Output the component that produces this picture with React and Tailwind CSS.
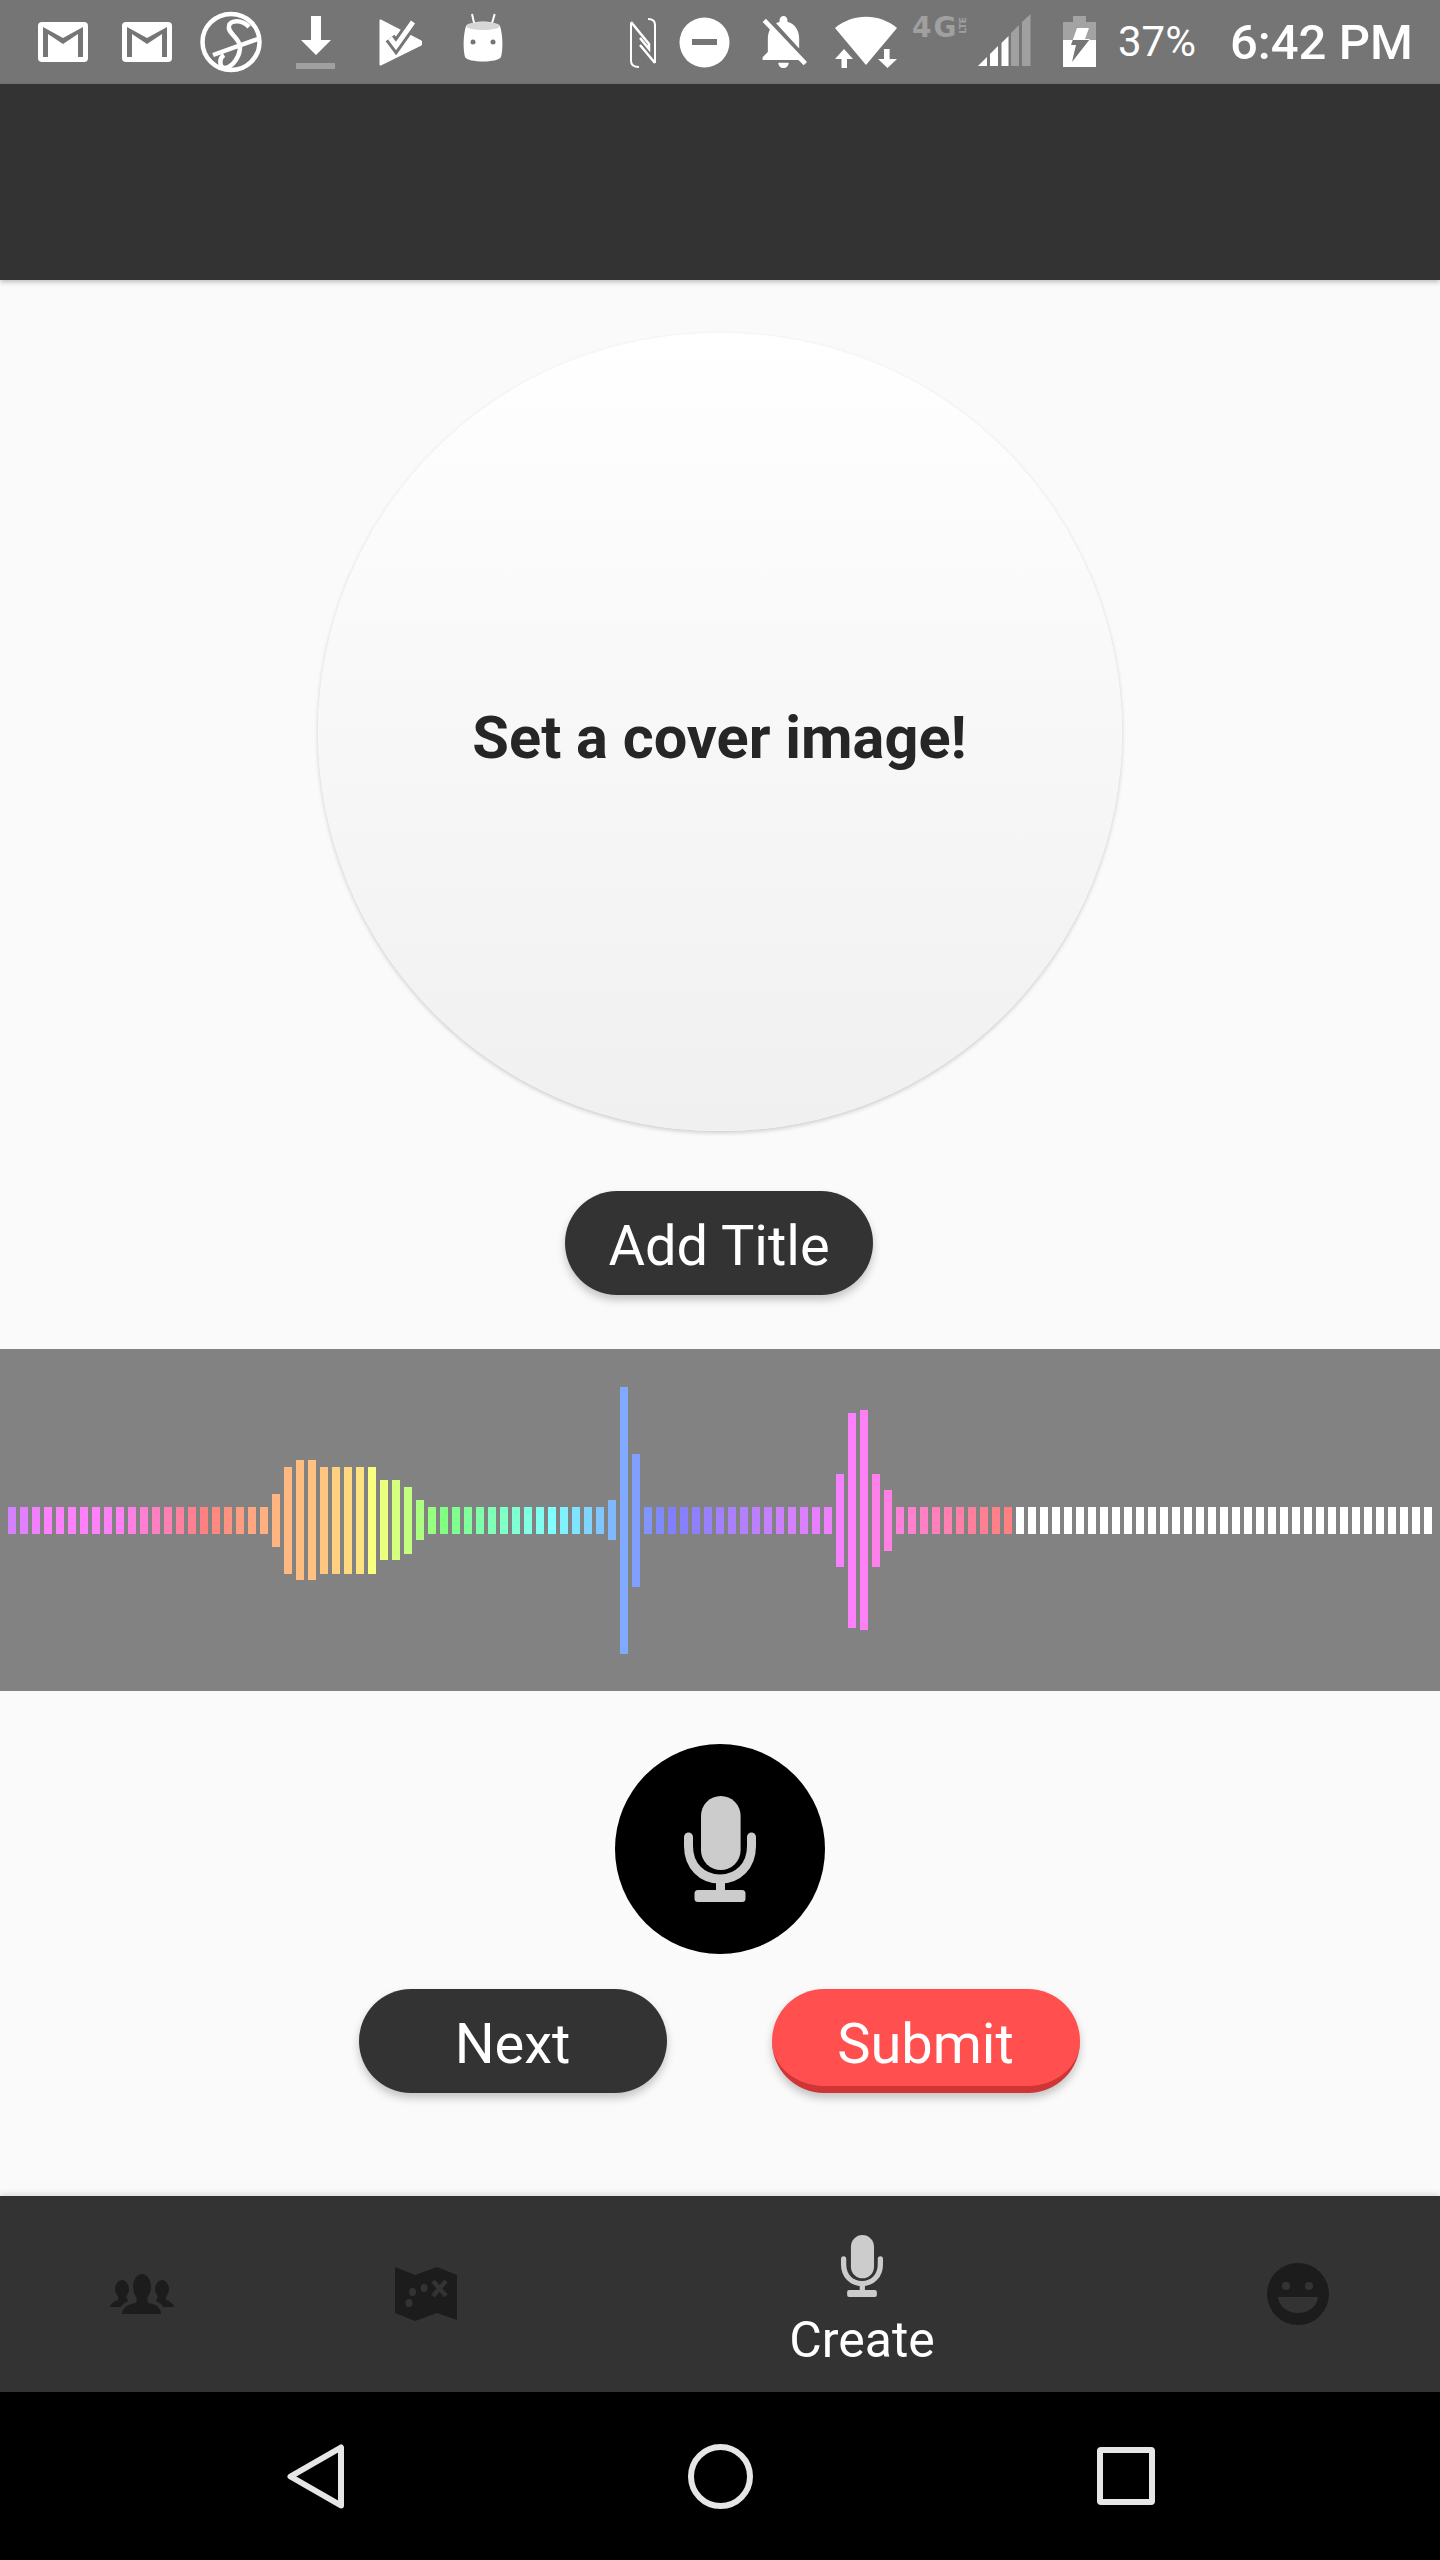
import React from 'react';

const tall = {
  22: 53, 23: 107, 24: 120, 25: 120, 26: 107, 27: 107, 28: 107, 29: 107, 30: 107,
  31: 80, 32: 80, 33: 67, 34: 40, 50: 40, 51: 267, 52: 133, 69: 93, 70: 215, 71: 220, 72: 93, 73: 61,
};

const hueStops = [
  [0, 280], [3, 300], [9, 305], [16, 360], [21, 383], [26, 393], [29, 407], [30, 422],
  [33, 448], [36, 480], [45, 540], [51, 580], [55, 600], [70, 660], [83, 720],
];

const hueAt = (i) => {
  for (let s = 1; s < hueStops.length; s++) {
    const [x0, h0] = hueStops[s - 1];
    const [x1, h1] = hueStops[s];
    if (i <= x1) return h0 + ((i - x0) / (x1 - x0)) * (h1 - h0);
  }
  return 0;
};

const bars = Array.from({ length: 119 }, (_, i) => ({
  height: tall[i] || 27,
  color: i < 84 ? `hsl(${hueAt(i) % 360}, 100%, 75%)` : '#ffffff',
}));

const Gmail = ({ className }) => (
  <svg className={className} width="50" height="84" viewBox="0 0 50 84">
    <rect x="0" y="22" width="50" height="40" rx="4" fill="#fff" />
    <path d="M5 27L25 38L45 27V57H40V34L25 44L10 34V57H5Z" fill="#757575" />
  </svg>
);

const GlobeS = ({ className }) => (
  <svg className={className} width="62" height="84" viewBox="0 0 62 84" fill="none" stroke="#fff">
    <ellipse cx="31" cy="42" rx="28.5" ry="28" strokeWidth="4.5" />
    <path d="M49 27C42 19 30 20 29 26C27 33 40 38 40 47C40 56 33 67 25 68C19 68 19 58 24 55" strokeWidth="4.5" />
    <path d="M13 55L58 39" strokeWidth="4.5" />
  </svg>
);

const Download = ({ className }) => (
  <svg className={className} width="39" height="84" viewBox="0 0 39 84">
    <path d="M15 16H25V40H35L20 55L5 40H15Z" fill="#fff" />
    <rect x="0" y="63" width="39" height="6" fill="#a0a0a0" />
  </svg>
);

const PlayCheck = ({ className }) => (
  <svg className={className} width="43" height="84" viewBox="0 0 43 84" fill="none">
    <path d="M1.5 20.5L41 41C43 42 43 44 41 45L1.5 64.5Z" fill="#fff" stroke="#fff" strokeWidth="2" strokeLinejoin="round" />
    <path d="M11 38L17 46L34 22" stroke="#757575" strokeWidth="11" />
    <path d="M11 38L17 46L34 22" stroke="#fff" strokeWidth="5" />
  </svg>
);

const AndroidBot = ({ className }) => (
  <svg className={className} width="40" height="84" viewBox="0 0 40 84">
    <path d="M9 14L11.5 25M31.7 14L28.5 25" stroke="#fff" strokeWidth="2" />
    <path d="M3 26C12 20 28 20 37 26C40 35 40 50 38 57C35 63 5 63 2 57C0 50 0 35 3 26Z" fill="#fff" />
    <ellipse cx="20" cy="26" rx="17" ry="4" fill="#d6d6d6" />
    <circle cx="10" cy="42" r="2.5" fill="#757575" />
    <circle cx="30" cy="42" r="2.5" fill="#757575" />
  </svg>
);

const Nfc = ({ className }) => (
  <svg className={className} width="26" height="84" viewBox="0 0 26 84" fill="none" stroke="#fff" strokeWidth="2">
    <path d="M1 23V61C1 65 4 67 9 67" />
    <path d="M18 19C23 19 25 21 25 25V63" />
    <path d="M1 22L19 44V49L10 38" strokeWidth="2.5" />
    <path d="M10 45L25 63" strokeWidth="2.5" />
  </svg>
);

const Dnd = ({ className }) => (
  <svg className={className} width="51" height="84" viewBox="0 0 51 84">
    <circle cx="25.5" cy="42.5" r="25" fill="#fff" />
    <rect x="13" y="39" width="25" height="6" fill="#757575" />
  </svg>
);

const BellOff = ({ className }) => (
  <svg className={className} width="47" height="52" viewBox="3 2.5 18 19.5" preserveAspectRatio="none" fill="#fff">
    <path d="M20 18.69L7.84 6.14 5.27 3.49 4 4.76l2.8 2.8v.01c-.52.99-.8 2.16-.8 3.42v5l-2 2v1h13.73l2 2L21 19.72l-1-1.03zM12 22c1.11 0 2-.89 2-2h-4c0 1.11.89 2 2 2zm6-7.32V11c0-3.08-1.64-5.64-4.5-6.32V4c0-.83-.67-1.5-1.5-1.5s-1.5.67-1.5 1.5v.68c-.15.03-.29.08-.42.12-.1.03-.2.07-.3.11h-.01c-.2.08-.4.17-.59.27-.01 0-.01 0-.02.01L18 14.68z" />
  </svg>
);

const Wifi = ({ className }) => (
  <svg className={className} width="62" height="84" viewBox="0 0 62 84" fill="#fff">
    <path d="M0 28C18 13 44 13 62 28L31 65Z" />
    <path d="M9 49L18 59H12V68H6.5V59H0Z" />
    <path d="M49 49H54.6V59H62L52.5 68L43 59H49Z" />
  </svg>
);

const Signal = ({ className }) => (
  <svg className={className} width="53" height="84" viewBox="0 0 53 84">
    <path d="M0 66L9 57V66Z" fill="#fff" />
    <path d="M12 54L20 46V66H12Z" fill="#fff" />
    <path d="M23.5 43L30.5 36V66H23.5Z" fill="#fff" />
    <path d="M33 33L41 25V66H33Z" fill="#a0a0a0" />
    <path d="M44 22L52.5 14V66H44Z" fill="#a0a0a0" />
  </svg>
);

const Battery = ({ className }) => (
  <svg className={className} width="33" height="84" viewBox="0 0 33 84">
    <defs>
      <clipPath id="bolt-top"><rect x="0" y="16" width="33" height="24" /></clipPath>
      <clipPath id="bolt-bottom"><rect x="0" y="40" width="33" height="27" /></clipPath>
    </defs>
    <path d="M10 16H23V22H33V40H0V22H10Z" fill="#a3a3a3" />
    <rect x="0" y="40" width="33" height="27" fill="#fff" />
    <path d="M14 28H26L22 39H27L9 62L13 45H8Z" fill="#fff" clipPath="url(#bolt-top)" />
    <path d="M14 28H26L22 39H27L9 62L13 45H8Z" fill="#757575" clipPath="url(#bolt-bottom)" />
  </svg>
);

const Mic = ({ className }) => (
  <svg className={className} viewBox="0 0 72 106" preserveAspectRatio="none" fill="none">
    <rect x="17" y="0" width="39.6" height="74" rx="19.8" fill="#cccccc" />
    <path d="M4.5 41V50C4.5 70 18 83 36 83C54 83 67.5 70 67.5 50V41" stroke="#cccccc" strokeWidth="9" strokeLinecap="round" />
    <rect x="32" y="84" width="9" height="14" fill="#cccccc" />
    <rect x="10.5" y="94" width="51" height="12" rx="3.5" fill="#cccccc" />
  </svg>
);

const Group = () => (
  <svg width="64" height="40" viewBox="0 0 64 40" fill="#1c1c1c">
    <ellipse cx="32" cy="13" rx="9" ry="13" />
    <path d="M27 22H37L38 29C45 30 51 33 51 40H12C12 33 19 30 26 29Z" />
    <ellipse cx="12" cy="15" rx="7" ry="9" />
    <path d="M8 22H16L18 27C16 28 12 30 11 33H0C1 29 5 27 8 26Z" />
    <ellipse cx="52" cy="15" rx="7" ry="9" />
    <path d="M48 22H56V26C59 27 63 29 64 33H53C52 30 48 28 46 27Z" />
  </svg>
);

const TreasureMap = () => (
  <svg width="62" height="54" viewBox="0 0 62 54">
    <path d="M0 0L20 8L42 0L62 8V53L42 46L20 54L0 46Z" fill="#1c1c1c" />
    <ellipse cx="17.5" cy="25" rx="3.5" ry="4" fill="#333" />
    <ellipse cx="29" cy="21" rx="3.5" ry="4" fill="#333" />
    <ellipse cx="14" cy="36" rx="3.5" ry="4" fill="#333" />
    <path d="M38 14L51 29M51 14L38 29" stroke="#333" strokeWidth="4.5" />
  </svg>
);

const Smile = () => (
  <svg width="62" height="62" viewBox="0 0 62 62">
    <circle cx="31" cy="31" r="31" fill="#1c1c1c" />
    <circle cx="19" cy="23" r="4" fill="#333" />
    <circle cx="42" cy="23" r="4" fill="#333" />
    <path d="M11 34H51C50 44 41 50 31 50C21 50 12 44 11 34Z" fill="#333" />
  </svg>
);

const StatusBar = () => (
  <div className="flex items-center h-[84px] bg-[#757575] font-['Roboto',sans-serif] text-white">
    <Gmail className="ml-[38px]" />
    <Gmail className="ml-[34px]" />
    <GlobeS className="ml-[28px]" />
    <Download className="ml-[34px]" />
    <PlayCheck className="ml-[44px]" />
    <AndroidBot className="ml-[41px]" />
    <Nfc className="ml-[127px]" />
    <Dnd className="ml-[23px]" />
    <BellOff className="ml-[30px]" />
    <Wifi className="ml-[28px]" />
    <div className="flex self-start items-start ml-[15px] mt-[15px] w-[62px] text-[#a0a0a0] font-bold font-['DejaVu_Sans',sans-serif]">
      <span className="text-[28px] leading-[26px] tracking-[2px]">4G</span>
      <span className="text-[9px] leading-[10px] mt-[2px] [writing-mode:vertical-rl] rotate-180">LTE</span>
    </div>
    <Signal className="ml-[4px]" />
    <Battery className="ml-[32px]" />
    <span className="ml-[22px] text-[42px] leading-none">37%</span>
    <span className="ml-[34px] text-[49px] leading-none font-medium">6:42 PM</span>
  </div>
);

const Pill = ({ label, className }) => (
  <button className={`flex items-center justify-center h-[104px] rounded-[52px] text-white text-[56px] shadow-[0_5px_8px_rgba(0,0,0,0.22)] ${className}`}>
    {label}
  </button>
);

const App = () => {
  return (
    <div className="w-[1440px] h-[2560px] flex flex-col bg-[#fafafa] font-['Roboto',sans-serif] overflow-hidden">
      <StatusBar />
      <div className="h-[196px] bg-[#333333] shadow-[0_2px_5px_rgba(0,0,0,0.25)]" />

      <main className="h-[1916px] flex flex-col items-center">
        <div className="mt-[53px] mr-[1px] w-[804px] h-[798px] flex items-center justify-center rounded-full bg-gradient-to-b from-white to-[#f0f0f0] shadow-[0_2px_4px_rgba(0,0,0,0.18)]">
          <span className="mt-[13px] text-[59.5px] font-bold text-[#262626]">Set a cover image!</span>
        </div>

        <Pill label="Add Title" className="mt-[60px] mr-[2px] pt-[6px] w-[308px] bg-[#333333]" />

        <div className="mt-[54px] w-full h-[342px] flex items-center gap-[4px] pl-[8px] bg-[#828282]">
          {bars.map((bar, i) => (
            <div key={i} className="w-[8px] shrink-0" style={{ height: bar.height, backgroundColor: bar.color }} />
          ))}
        </div>

        <div className="mt-[53px] w-[210px] h-[210px] flex items-center justify-center rounded-full bg-black">
          <Mic className="w-[72px] h-[106px]" />
        </div>

        <div className="mt-[35px] mr-[2px] flex gap-[105px]">
          <Pill label="Next" className="w-[308px] pt-[6px] bg-[#333333]" />
          <Pill label="Submit" className="w-[308px] pt-[13px] bg-[#ff4f4f] border-b-[7px] border-[#cf3535]" />
        </div>
      </main>

      <nav className="h-[196px] flex bg-[#333333] shadow-[0_-2px_6px_rgba(0,0,0,0.12)]">
        <div className="w-[284px] flex items-center justify-center"><Group /></div>
        <div className="w-[284px] flex items-center justify-center"><TreasureMap /></div>
        <div className="w-[588px] flex flex-col items-center pt-[39px]">
          <Mic className="w-[42px] h-[62px]" />
          <span className="mt-[15px] text-white text-[50px] leading-[56px]">Create</span>
        </div>
        <div className="w-[284px] flex items-center justify-center"><Smile /></div>
      </nav>

      <div className="h-[168px] flex items-center justify-center gap-[344px] pl-[1px] bg-black">
        <svg width="57" height="65" viewBox="0 0 57 65" fill="none">
          <path d="M3.5 32.5L54 3.5V61.5Z" stroke="#e6e6e6" strokeWidth="6" strokeLinejoin="round" />
        </svg>
        <div className="w-[65px] h-[65px] rounded-full border-[6px] border-[#e6e6e6]" />
        <div className="w-[58px] h-[58px] rounded-[4px] border-[6px] border-[#e6e6e6]" />
      </div>
    </div>
  );
};

export default App;
